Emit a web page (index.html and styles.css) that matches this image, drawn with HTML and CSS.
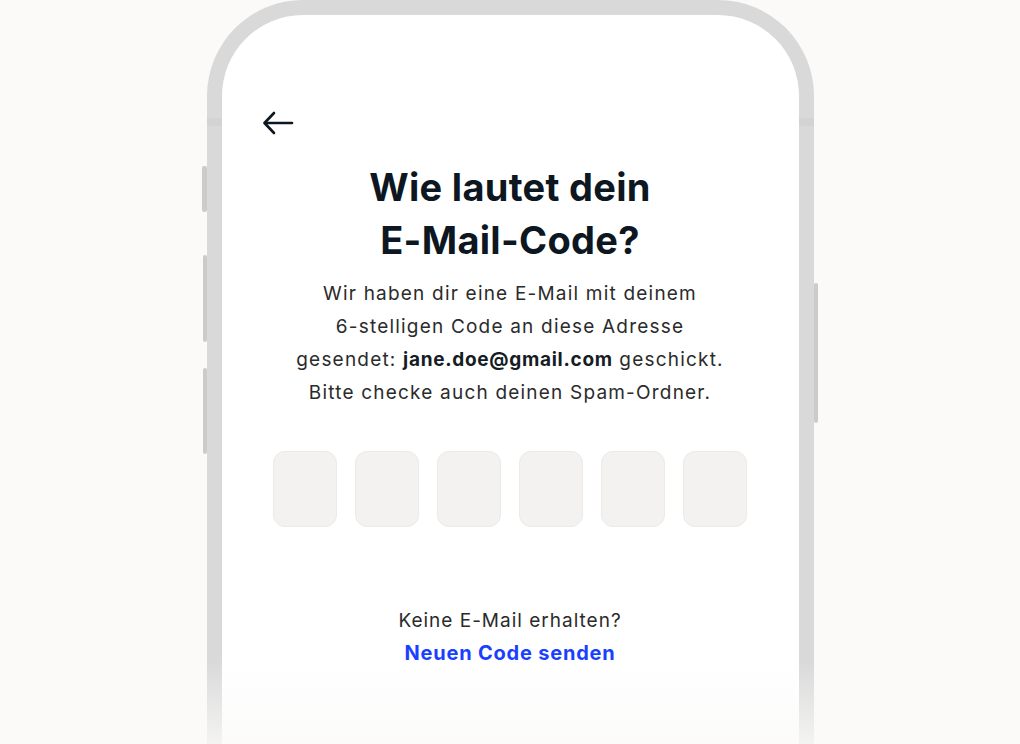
FILE: index.html
```html
<!DOCTYPE html>
<html lang="de">
<head>
<meta charset="utf-8">
<title>E-Mail-Code</title>
<link rel="stylesheet" href="styles.css">
</head>
<body>
<div class="stage">
  <div class="phone">
    <span class="btn btn-l1"></span>
    <span class="btn btn-l2"></span>
    <span class="btn btn-l3"></span>
    <span class="btn btn-r1"></span>
    <span class="seam seam-l"></span>
    <span class="seam seam-r"></span>
    <div class="screen">
      <div class="topbar">
        <svg class="back" width="32" height="24" viewBox="0 0 32 24" fill="none" stroke="#0c1722" stroke-width="2.6" stroke-linecap="round" stroke-linejoin="round">
          <path d="M30 12H3"/>
          <path d="M12 2L2.5 12L12 22"/>
        </svg>
      </div>
      <h1 class="title">Wie lautet dein<br>E-Mail-Code?</h1>
      <p class="desc">Wir haben dir eine E-Mail mit deinem<br>6-stelligen Code an diese Adresse<br>gesendet: <strong>jane.doe@gmail.com</strong> geschickt.<br>Bitte checke auch deinen Spam-Ordner.</p>
      <div class="code">
        <div class="digit"></div>
        <div class="digit"></div>
        <div class="digit"></div>
        <div class="digit"></div>
        <div class="digit"></div>
        <div class="digit"></div>
      </div>
      <div class="resend">
        <p class="resend-q">Keine E-Mail erhalten?</p>
        <a class="resend-link" href="#">Neuen Code senden</a>
      </div>
    </div>
  </div>
  <div class="fade"></div>
</div>
</body>
</html>
```
FILE: styles.css
```css
html, body {
  margin: 0;
  padding: 0;
  height: 100%;
  background: #fbfaf9;
  overflow: hidden;
}
body {
  font-family: "Inter", "Noto Sans", sans-serif;
  color: #2b2b2b;
}
.stage {
  position: relative;
  display: flex;
  justify-content: center;
  height: 744px;
  overflow: hidden;
}
.phone {
  position: relative;
  width: 607px;
  height: 900px;
  box-sizing: border-box;
  border: 15px solid #d9d9d9;
  border-bottom: none;
  border-radius: 96px 96px 0 0;
  background: #ffffff;
}
.btn {
  position: absolute;
  background: #cbcbcb;
  border-radius: 2px;
}
.btn-l1 { left: -20px; top: 151px; width: 5px; height: 46px; }
.btn-l2 { left: -19px; top: 240px; width: 4px; height: 87px; }
.btn-l3 { left: -19px; top: 353px; width: 4px; height: 86px; }
.btn-r1 { right: -19px; top: 268px; width: 4px; height: 140px; }
.seam {
  position: absolute;
  top: 103px;
  width: 15px;
  height: 8px;
  background: #d3d3d3;
}
.seam-l { left: -15px; }
.seam-r { right: -15px; }
.screen {
  display: flex;
  flex-direction: column;
  align-items: center;
  padding-top: 96px;
}
.topbar {
  align-self: stretch;
  padding-left: 40px;
  height: 24px;
}
.back { display: block; }
.title {
  margin: 26px 0 0;
  font-size: 38px;
  line-height: 53px;
  font-weight: 700;
  color: #0c1722;
  text-align: center;
  letter-spacing: 0.3px;
}
.desc {
  margin: 10px 0 0;
  font-size: 19px;
  line-height: 33px;
  text-align: center;
  color: #2b2b2b;
  letter-spacing: 1.2px;
  white-space: nowrap;
}
.desc strong {
  font-weight: 700;
  color: #161c24;
  letter-spacing: 0.7px;
}
.code {
  display: flex;
  gap: 18px;
  margin-top: 42px;
}
.digit {
  width: 64px;
  height: 76px;
  box-sizing: border-box;
  background: #f3f2f0;
  border: 1px solid #ebeae6;
  border-radius: 12px;
}
.resend {
  margin-top: 78px;
  text-align: center;
}
.resend-q {
  margin: 0;
  font-size: 19px;
  line-height: 32px;
  color: #2b2b2b;
  letter-spacing: 1px;
}
.resend-link {
  display: block;
  font-size: 20px;
  line-height: 32px;
  font-weight: 700;
  color: #1a3fff;
  text-decoration: none;
  letter-spacing: 0.8px;
}
.fade {
  position: absolute;
  left: 0;
  right: 0;
  bottom: 0;
  height: 84px;
  background: linear-gradient(to bottom, rgba(251,250,249,0) 0%, rgba(251,250,249,0.8) 100%);
  pointer-events: none;
}
```
